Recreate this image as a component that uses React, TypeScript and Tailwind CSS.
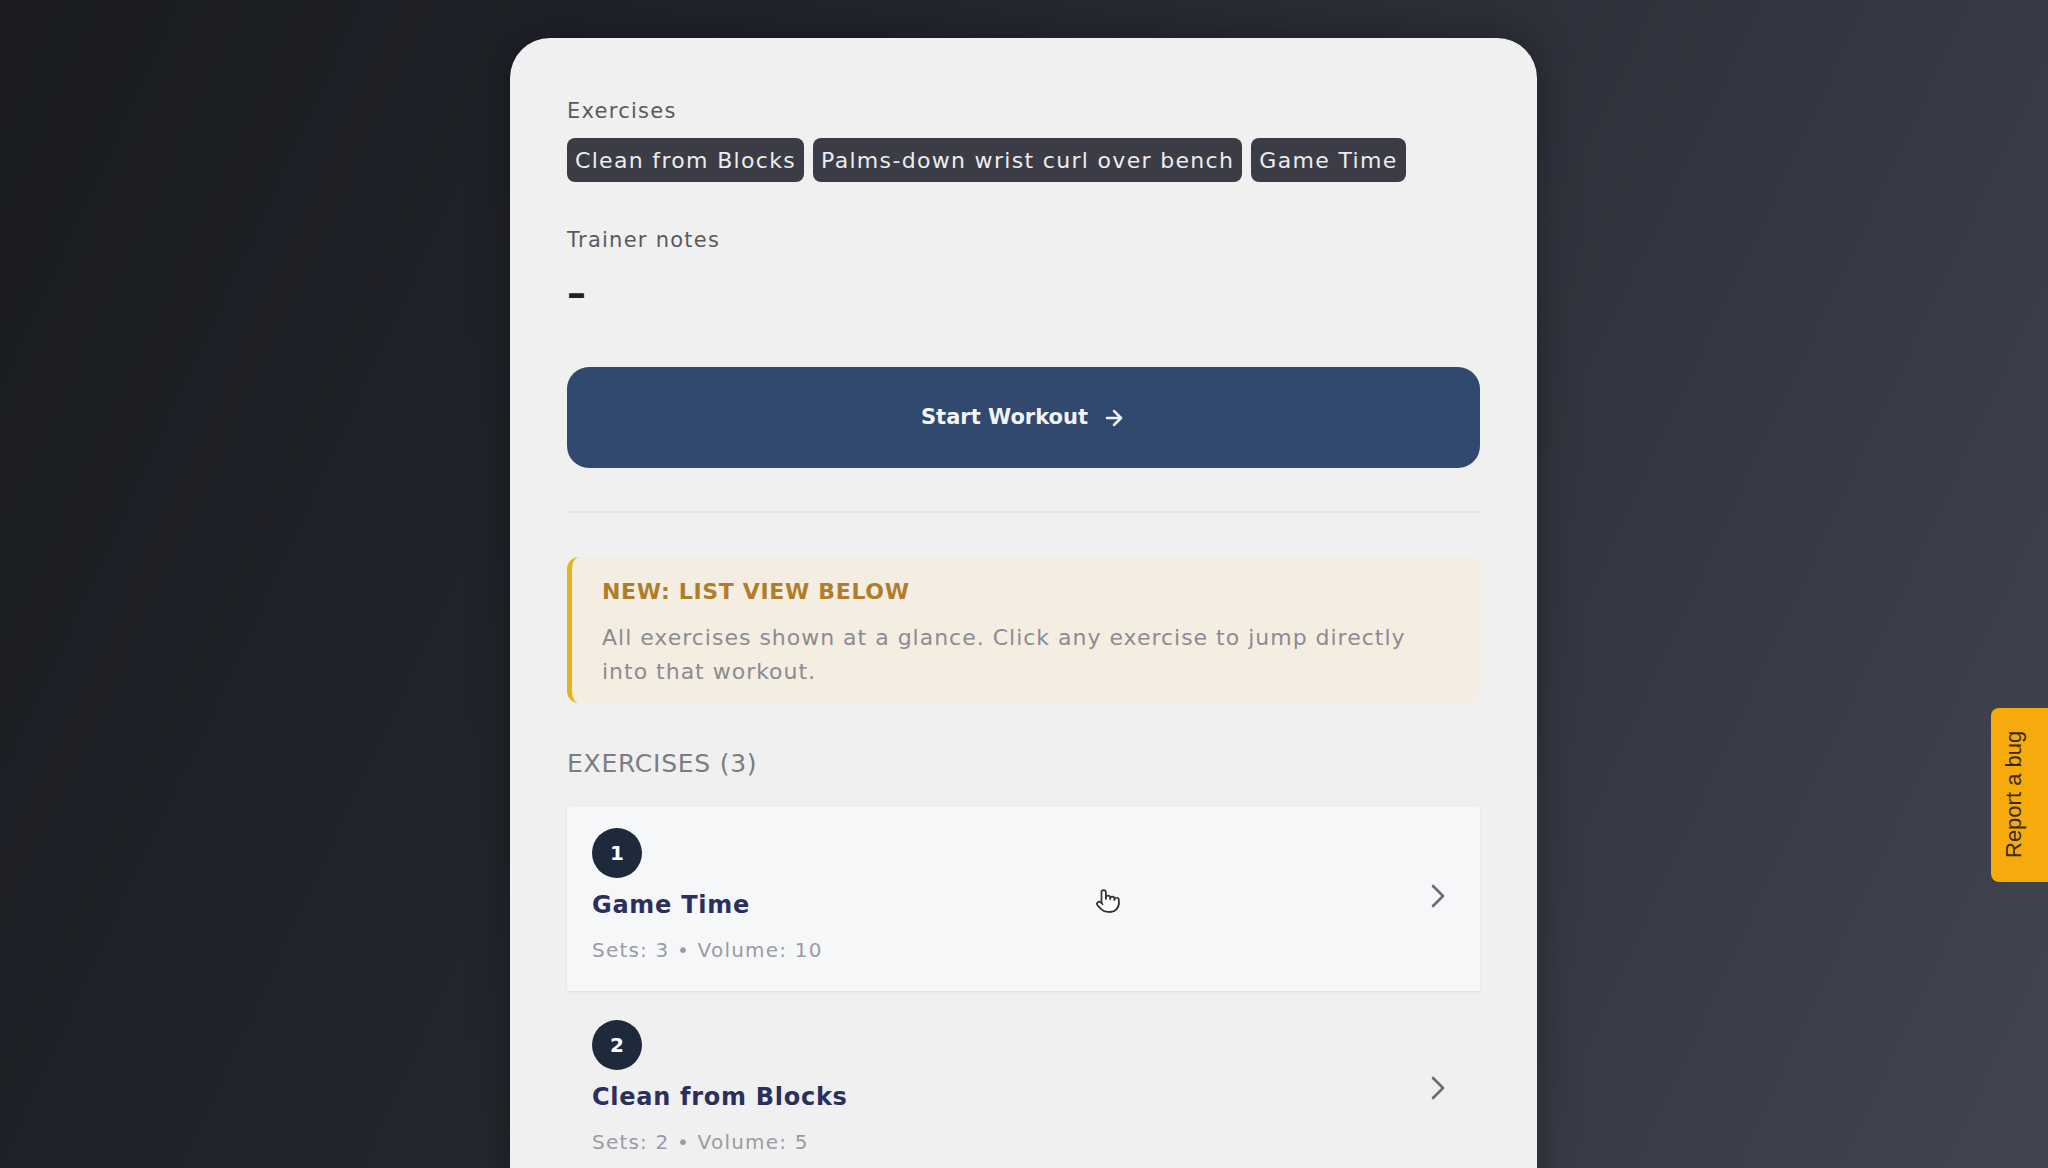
import React from "react";
import { ChevronRight, ArrowRight, Pointer } from "lucide-react";

const chips = ["Clean from Blocks", "Palms-down wrist curl over bench", "Game Time"];

const items = [
  { n: 1, name: "Game Time", sets: 3, volume: 10, active: true },
  { n: 2, name: "Clean from Blocks", sets: 2, volume: 5, active: false },
];

export default function App() {
  return (
    <div
      className="relative w-[2048px] h-[1168px] overflow-hidden bg-[linear-gradient(115deg,#191b20_0%,#22252c_35%,#333640_70%,#42454f_100%)]"
      style={{ fontFamily: '"DejaVu Sans", "Open Sans", sans-serif' }}
    >
      <div className="ml-[510px] mt-[38px] w-[1027px] min-h-[1200px] rounded-t-[40px] bg-[#f0f0f0] px-[57px] pt-[58px] shadow-[0_0_40px_rgba(0,0,0,0.35)]">
        <div className="text-[21px] leading-[30px] tracking-[0.06em] text-[#5a5a5e]">Exercises</div>
        <div className="mt-[12px] flex gap-[9px]">
          {chips.map((c) => (
            <span
              key={c}
              className="flex h-[44px] items-center rounded-[8px] bg-[#3b3c45] px-[8px] text-[22px] tracking-[0.06em] text-[#ececef]"
            >
              {c}
            </span>
          ))}
        </div>

        <div className="mt-[43px] text-[21px] leading-[30px] tracking-[0.06em] text-[#5a5a5e]">Trainer notes</div>
        <div className="mt-[21px] text-[38px] leading-[34px] font-bold text-[#222]">–</div>

        <button className="mt-[57px] flex h-[101px] w-full items-center justify-center gap-[14px] rounded-[22px] bg-[#31496f] text-[21px] font-bold text-[#f2f4f8]">
          <span>Start Workout</span>
          <ArrowRight size={24} strokeWidth={2.5} />
        </button>

        <div className="mt-[43px] h-[2px] w-full bg-[#e4e4e6]" />

        <div className="mt-[44px] rounded-[12px] border-l-[5px] border-[#e4b41e] bg-[#f4ede2] pl-[30px] pr-[20px] pt-[20px] pb-[14px]">
          <div className="text-[22px] leading-[30px] font-bold tracking-[0.03em] text-[#b07d2a]">NEW: LIST VIEW BELOW</div>
          <div className="mt-[14px] text-[22px] leading-[34px] tracking-[0.045em] text-[#8b8b93]">
            All exercises shown at a glance. Click any exercise to jump directly
            <br />
            into that workout.
          </div>
        </div>

        <div className="mt-[45px] text-[25px] leading-[32px] tracking-[0.03em] text-[#7c7c84]">
          EXERCISES (3)
        </div>

        <div className="mt-[27px] flex flex-col gap-[7px]">
          {items.map((it) => (
            <div
              key={it.n}
              className={
                it.active
                  ? "relative flex items-center justify-between border-b border-[#e4e4e6] bg-[#f6f7f9] pl-[25px] pr-[22px] pt-[21px] pb-[27px] shadow-[0_1px_3px_rgba(0,0,0,0.05)]"
                  : "relative flex items-center justify-between pl-[25px] pr-[22px] pt-[21px] pb-[27px]"
              }
            >
              <div className="flex flex-col">
                <div className="flex h-[50px] w-[50px] items-center justify-center rounded-full bg-[#1e293b] text-[20px] font-bold text-white">
                  {it.n}
                </div>
                <div className="mt-[11px] text-[24px] leading-[32px] font-bold tracking-[0.03em] text-[#2b2f5b]">{it.name}</div>
                <div className="mt-[15px] text-[20px] leading-[28px] tracking-[0.06em] text-[#9b9ba3]">
                  Sets: {it.sets} • Volume: {it.volume}
                </div>
              </div>
              <ChevronRight size={40} strokeWidth={1.6} className="text-[#6b6b75]" />
            </div>
          ))}
        </div>
      </div>

      <div className="absolute left-[1095px] top-[888px]">
        <Pointer size={26} strokeWidth={1.6} fill="#ffffff" className="text-[#333]" />
      </div>

      <div className="absolute left-[1991px] top-[708px] flex h-[174px] w-[70px] items-center rounded-l-[8px] bg-[#f7aa0c] pl-[8px]">
        <span
          className="block -rotate-90 whitespace-nowrap text-[22px] text-[#3a2800]"
          style={{ fontFamily: '"Liberation Sans", Arial, sans-serif', width: "30px", lineHeight: "30px" }}
        >
          <span className="inline-block -translate-x-[48px]">Report a bug</span>
        </span>
      </div>
    </div>
  );
}
